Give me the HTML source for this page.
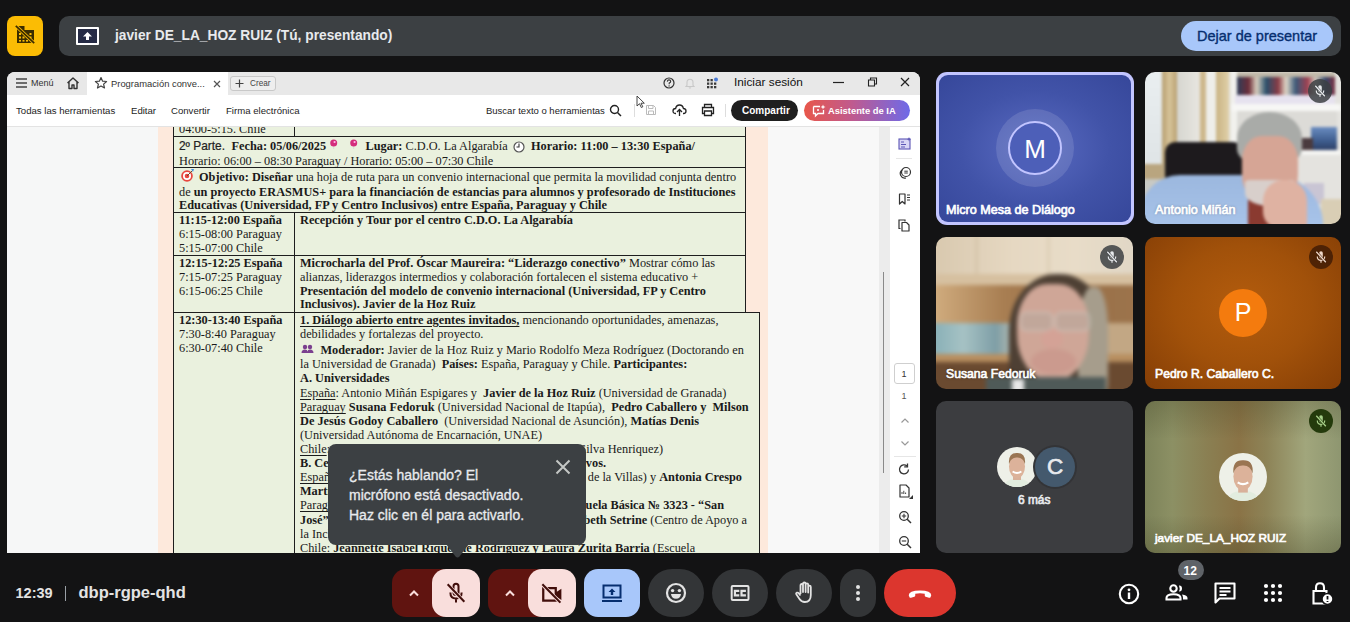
<!DOCTYPE html>
<html><head><meta charset="utf-8"><style>
html,body{margin:0;padding:0;}
body{width:1350px;height:622px;overflow:hidden;background:#131314;position:relative;font-family:"Liberation Sans",sans-serif;}
.t{position:absolute;white-space:nowrap;line-height:1;}
svg{overflow:visible;}
u{text-decoration-thickness:1px;text-underline-offset:1.5px;}
</style></head><body>
<div style="position:absolute;left:7px;top:16px;width:36px;height:40px;background:#fbbc04;border-radius:8px;"></div>
<svg style="position:absolute;left:15px;top:25px;" width="20" height="19" viewBox="0 0 20 19"><path d="M2 1 H9.5 V5 H19 V18 H2 Z" fill="#3a2c00"/><g fill="#fbbc04"><rect x="4" y="8" width="2" height="2"/><rect x="4" y="11.5" width="2" height="2"/><rect x="4" y="15" width="2" height="1.6"/><rect x="7.5" y="11.5" width="2" height="2"/><rect x="7.5" y="15" width="2" height="1.6"/><rect x="11" y="15" width="2" height="1.6"/><rect x="14.5" y="8" width="2" height="2"/><rect x="14.5" y="11.5" width="2" height="2"/></g><path d="M0.5 0.5 L19.5 18.5" stroke="#fbbc04" stroke-width="3.2"/><path d="M0.8 0.8 L19.2 18.2" stroke="#3a2c00" stroke-width="1.7"/></svg>
<div style="position:absolute;left:59px;top:16px;width:1282px;height:40px;background:#3c4043;border-radius:10px;"></div>
<div style="position:absolute;left:76px;top:27px;width:23px;height:18px;border:2px solid #fff;box-sizing:border-box;border-radius:1px;background:#262b45;"></div>
<svg style="position:absolute;left:81px;top:30px;" width="13" height="12" viewBox="0 0 13 12"><path d="M6.5 2 L11 6.5 H8 V10 H5 V6.5 H2 Z" fill="#fff"/></svg>
<div class="t" style="left:115px;top:29.36px;font-size:13.75px;color:#e8eaed;font-weight:700;font-family:'Liberation Sans', sans-serif;">javier DE_LA_HOZ RUIZ (Tú, presentando)</div>
<div style="position:absolute;left:1181px;top:21px;width:152px;height:30px;background:#a8c7fa;border-radius:15px;"></div>
<div class="t" style="left:1197px;top:28.73px;font-size:14.5px;color:#062e6f;font-weight:400;font-family:'Liberation Sans', sans-serif;-webkit-text-stroke:0.35px #062e6f;">Dejar de presentar</div>
<div style="position:absolute;left:7px;top:72px;width:913px;height:481px;background:#fff;border-radius:8px;overflow:hidden;"></div>
<div style="position:absolute;left:7px;top:72px;width:913px;height:22.5px;background:#e8e8e8;border-radius:8px 8px 0 0;"></div>
<div style="position:absolute;left:87px;top:72px;width:141px;height:22.5px;background:#fff;"></div>
<svg style="position:absolute;left:16px;top:78px;" width="12" height="10" viewBox="0 0 12 10"><path d="M0 1h11M0 5h11M0 9h11" stroke="#444" stroke-width="1.4"/></svg>
<div class="t" style="left:31px;top:79.38px;font-size:9px;color:#333;font-weight:400;font-family:'Liberation Sans', sans-serif;">Menú</div>
<svg style="position:absolute;left:66px;top:76px;" width="14" height="14" viewBox="0 0 14 14"><path d="M1.5 7 L7 2 L12.5 7 M3 6 V12.5 H6 V9 H8 V12.5 H11 V6" fill="none" stroke="#333" stroke-width="1.4" stroke-linejoin="round"/></svg>
<svg style="position:absolute;left:94px;top:76px;" width="14" height="14" viewBox="0 0 14 14"><path d="M7 1.5 L8.6 5.2 L12.6 5.5 L9.6 8.1 L10.5 12 L7 9.9 L3.5 12 L4.4 8.1 L1.4 5.5 L5.4 5.2 Z" fill="none" stroke="#444" stroke-width="1.2" stroke-linejoin="round"/></svg>
<div class="t" style="left:111px;top:79.04px;font-size:9.4px;color:#333;font-weight:400;font-family:'Liberation Sans', sans-serif;">Programación conve...</div>
<svg style="position:absolute;left:213px;top:80px;" width="8" height="8" viewBox="0 0 8 8"><path d="M1 1 L7 7 M7 1 L1 7" stroke="#555" stroke-width="1.2"/></svg>
<div style="position:absolute;left:230px;top:76px;width:46px;height:15px;border:1px solid #c8c8c8;border-radius:3px;box-sizing:border-box;background:#eee;"></div>
<svg style="position:absolute;left:235px;top:79px;" width="9" height="9" viewBox="0 0 9 9"><path d="M4.5 0.5 V8.5 M0.5 4.5 H8.5" stroke="#444" stroke-width="1.2"/></svg>
<div class="t" style="left:250px;top:80.06px;font-size:8.2px;color:#444;font-weight:400;font-family:'Liberation Sans', sans-serif;">Crear</div>
<svg style="position:absolute;left:663px;top:77px;" width="12" height="12" viewBox="0 0 12 12"><circle cx="6" cy="6" r="5" fill="none" stroke="#333" stroke-width="1.2"/><path d="M4.3 4.6 Q4.5 2.9 6 2.9 Q7.7 2.9 7.7 4.4 Q7.7 5.4 6.2 6 V7.2" fill="none" stroke="#333" stroke-width="1.1"/><circle cx="6.1" cy="8.9" r="0.7" fill="#333"/></svg>
<svg style="position:absolute;left:684px;top:77px;" width="12" height="12" viewBox="0 0 12 12"><path d="M2 9.5 H10 L9 8.3 V5.5 Q9 2.3 6 2.3 Q3 2.3 3 5.5 V8.3 Z M5 10.5 Q6 11.7 7 10.5" fill="none" stroke="#c8c8c8" stroke-width="1.1"/></svg>
<svg style="position:absolute;left:706px;top:77px;" width="13" height="12" viewBox="0 0 13 12"><g fill="#3b3b3b"><rect x="1" y="2" width="2.3" height="2.3"/><rect x="4.5" y="2" width="2.3" height="2.3"/><rect x="1" y="5.5" width="2.3" height="2.3"/><rect x="4.5" y="5.5" width="2.3" height="2.3"/><rect x="8" y="5.5" width="2.3" height="2.3"/><rect x="1" y="9" width="2.3" height="2.3"/><rect x="4.5" y="9" width="2.3" height="2.3"/><rect x="8" y="9" width="2.3" height="2.3"/></g><circle cx="10" cy="2.5" r="2" fill="#4a7bd6"/></svg>
<div class="t" style="left:734px;top:77.01px;font-size:11.8px;color:#111;font-weight:400;font-family:'Liberation Sans', sans-serif;">Iniciar sesión</div>
<svg style="position:absolute;left:833px;top:81px;" width="12" height="3" viewBox="0 0 12 3"><path d="M0 1.5 H11" stroke="#222" stroke-width="1.2"/></svg>
<svg style="position:absolute;left:866px;top:77px;" width="12" height="10" viewBox="0 0 12 10"><path d="M2.5 3 H8.5 V9 H2.5 Z M4.5 3 V1 H10.5 V7 H8.5" fill="none" stroke="#222" stroke-width="1.1"/></svg>
<svg style="position:absolute;left:900px;top:77px;" width="10" height="10" viewBox="0 0 10 10"><path d="M1 1 L9 9 M9 1 L1 9" stroke="#222" stroke-width="1.2"/></svg>
<div class="t" style="left:16px;top:105.87px;font-size:9.6px;color:#1d1d1d;font-weight:400;font-family:'Liberation Sans', sans-serif;">Todas las herramientas</div>
<div class="t" style="left:131px;top:105.87px;font-size:9.6px;color:#1d1d1d;font-weight:400;font-family:'Liberation Sans', sans-serif;">Editar</div>
<div class="t" style="left:171px;top:105.87px;font-size:9.6px;color:#1d1d1d;font-weight:400;font-family:'Liberation Sans', sans-serif;">Convertir</div>
<div class="t" style="left:226px;top:105.87px;font-size:9.6px;color:#1d1d1d;font-weight:400;font-family:'Liberation Sans', sans-serif;">Firma electrónica</div>
<div class="t" style="left:486px;top:105.96px;font-size:9.5px;color:#222;font-weight:400;font-family:'Liberation Sans', sans-serif;">Buscar texto o herramientas</div>
<svg style="position:absolute;left:609px;top:104px;" width="13" height="13" viewBox="0 0 13 13"><circle cx="5.5" cy="5.5" r="4" fill="none" stroke="#222" stroke-width="1.4"/><path d="M8.5 8.5 L12 12" stroke="#222" stroke-width="1.5"/></svg>
<div style="position:absolute;left:634px;top:104px;width:1px;height:13px;background:#ddd;"></div>
<svg style="position:absolute;left:645px;top:104px;" width="12" height="12" viewBox="0 0 12 12"><path d="M1.5 1.5 H8.5 L10.5 3.5 V10.5 H1.5 Z M3.5 1.5 V4.5 H8 V1.5 M3.5 10.5 V7 H8.5 V10.5" fill="none" stroke="#bbb" stroke-width="1"/></svg>
<svg style="position:absolute;left:672px;top:103px;" width="15" height="14" viewBox="0 0 15 14"><path d="M4 10.5 H3.5 Q1 10.5 1 8 Q1 5.6 3.6 5.5 Q4.3 2 7.5 2 Q10.8 2 11.4 5.5 Q14 5.7 14 8 Q14 10.5 11.5 10.5 H11" fill="none" stroke="#222" stroke-width="1.3"/><path d="M7.5 13 V6.5 M5 9 L7.5 6.5 L10 9" fill="none" stroke="#222" stroke-width="1.3"/></svg>
<svg style="position:absolute;left:701px;top:103px;" width="14" height="14" viewBox="0 0 14 14"><path d="M3.5 4.5 V1.5 H10.5 V4.5 M3 10.5 H1.5 V4.5 H12.5 V10.5 H11 M3.5 8 H10.5 V12.5 H3.5 Z" fill="none" stroke="#222" stroke-width="1.3"/></svg>
<div style="position:absolute;left:725px;top:104px;width:1px;height:13px;background:#ddd;"></div>
<div style="position:absolute;left:731px;top:100px;width:67px;height:21px;background:#1f1f1f;border-radius:11px;"></div>
<div class="t" style="left:742px;top:105.53px;font-size:10px;color:#fff;font-weight:700;font-family:'Liberation Sans', sans-serif;">Compartir</div>
<div style="position:absolute;left:804px;top:100px;width:106px;height:21px;border-radius:11px;background:linear-gradient(90deg,#e8574a 0%,#c05a8e 45%,#6e6ae8 100%);"></div>
<svg style="position:absolute;left:812px;top:104px;" width="14" height="13" viewBox="0 0 14 13"><path d="M1.5 2.5 H8 M11.5 6 V9.5 H6 L3.5 12 V9.5 H1.5 V2.5" fill="none" stroke="#fff" stroke-width="1.3"/><path d="M11 0.5 L11.7 2.3 L13.5 3 L11.7 3.7 L11 5.5 L10.3 3.7 L8.5 3 L10.3 2.3 Z" fill="#fff"/><circle cx="6" cy="6" r="1" fill="#fff"/></svg>
<div class="t" style="left:828px;top:106.04px;font-size:9.4px;color:#fff;font-weight:700;font-family:'Liberation Sans', sans-serif;">Asistente de IA</div>
<div style="position:absolute;left:7px;top:126px;width:151px;height:427px;background:#f6f7f7;"></div>
<div style="position:absolute;left:158px;top:126px;width:610px;height:427px;background:#fde9dc;"></div>
<div style="position:absolute;left:768px;top:126px;width:111px;height:427px;background:#f8f8f8;"></div>
<div style="position:absolute;left:879px;top:126px;width:11px;height:427px;background:#ececec;"></div>
<div style="position:absolute;left:890px;top:126px;width:30px;height:427px;background:#fff;"></div>
<div style="position:absolute;left:883px;top:272px;width:1px;height:201px;background:#8a8a8a;"></div>
<svg style="position:absolute;left:898px;top:137px;" width="14" height="13" viewBox="0 0 14 13"><rect x="1" y="2" width="11" height="10" fill="#d9d6f5" stroke="#5b55b5" stroke-width="1.1"/><path d="M3 5h3M3 7.5h5M3 10h4" stroke="#5b55b5" stroke-width="1"/><path d="M11 0 L11.6 1.6 L13.2 2.2 L11.6 2.8 L11 4.4 L10.4 2.8 L8.8 2.2 L10.4 1.6Z" fill="#5b55b5"/></svg>
<div style="position:absolute;left:896px;top:158px;width:16px;height:1px;background:#e6e6e6;"></div>
<svg style="position:absolute;left:898px;top:166px;" width="14" height="13" viewBox="0 0 14 13"><circle cx="8" cy="6" r="4.5" fill="none" stroke="#333" stroke-width="1.2"/><path d="M4.2 4 A4.5 4.5 0 0 0 8 12" fill="none" stroke="#333" stroke-width="1.2"/><path d="M6.3 5.2h3.5M6.3 7h3.5" stroke="#333" stroke-width="1"/></svg>
<svg style="position:absolute;left:898px;top:193px;" width="14" height="12" viewBox="0 0 14 12"><path d="M1.5 1 H7 V11 L4.25 8.5 L1.5 11 Z" fill="none" stroke="#333" stroke-width="1.2" stroke-linejoin="round"/><path d="M9 2h3M9 4.5h3M9 7h3" stroke="#333" stroke-width="1"/></svg>
<svg style="position:absolute;left:898px;top:219px;" width="13" height="13" viewBox="0 0 13 13"><path d="M2.5 9.5 H1 V1 H7 V2.5" fill="none" stroke="#333" stroke-width="1.2"/><path d="M4 3.5 H8.5 L11 6 V12 H4 Z" fill="none" stroke="#333" stroke-width="1.2" stroke-linejoin="round"/></svg>
<div style="position:absolute;left:894px;top:363px;width:21px;height:21px;border:1px solid #cfcfcf;border-radius:3px;box-sizing:border-box;background:#fff;"></div>
<div class="t" style="left:901.5px;top:369.88px;font-size:9px;color:#333;font-weight:400;font-family:'Liberation Sans', sans-serif;">1</div>
<div class="t" style="left:901.5px;top:392.38px;font-size:9px;color:#555;font-weight:400;font-family:'Liberation Sans', sans-serif;">1</div>
<svg style="position:absolute;left:900px;top:417px;" width="10" height="7" viewBox="0 0 10 7"><path d="M1.5 5.5 L5 2 L8.5 5.5" fill="none" stroke="#999" stroke-width="1.2"/></svg>
<svg style="position:absolute;left:900px;top:440px;" width="10" height="7" viewBox="0 0 10 7"><path d="M1.5 1.5 L5 5 L8.5 1.5" fill="none" stroke="#999" stroke-width="1.2"/></svg>
<div style="position:absolute;left:894px;top:456px;width:22px;height:1px;background:#e6e6e6;"></div>
<svg style="position:absolute;left:898px;top:463px;" width="13" height="13" viewBox="0 0 13 13"><path d="M10.5 6.5 A4.5 4.5 0 1 1 9 3" fill="none" stroke="#333" stroke-width="1.3"/><path d="M9.5 0.5 V3.8 H6.2" fill="none" stroke="#333" stroke-width="1.3"/></svg>
<svg style="position:absolute;left:898px;top:484px;" width="16" height="15" viewBox="0 0 16 15"><path d="M2 1 H8 L11 4 V13 H2 Z" fill="none" stroke="#333" stroke-width="1.2" stroke-linejoin="round"/><path d="M4 10 V8 M5.8 10 V6.8 M7.6 10 V8.5" stroke="#333" stroke-width="0.9"/><path d="M15 11 V15 H11 Z" fill="#333"/></svg>
<svg style="position:absolute;left:898px;top:510px;" width="14" height="14" viewBox="0 0 14 14"><circle cx="6" cy="6" r="4.3" fill="none" stroke="#333" stroke-width="1.3"/><path d="M9.2 9.2 L13 13" stroke="#333" stroke-width="1.5"/><path d="M6 3.8 V8.2 M3.8 6 H8.2" stroke="#333" stroke-width="1.1"/></svg>
<svg style="position:absolute;left:898px;top:535px;" width="14" height="14" viewBox="0 0 14 14"><circle cx="6" cy="6" r="4.3" fill="none" stroke="#333" stroke-width="1.3"/><path d="M9.2 9.2 L13 13" stroke="#333" stroke-width="1.5"/><path d="M3.8 6 H8.2" stroke="#333" stroke-width="1.1"/></svg>
<div style="position:absolute;left:0;top:126px;width:920px;height:427px;overflow:hidden;"><div style="position:absolute;left:0;top:-126px;width:1350px;height:700px;">
<div style="position:absolute;left:174px;top:100px;width:571px;height:212px;background:#eaf1de;"></div>
<div style="position:absolute;left:174px;top:312px;width:586px;height:260px;background:#eaf1de;"></div>
<div style="position:absolute;left:173px;top:100px;width:1px;height:460px;background:#1e1e1e;"></div>
<div style="position:absolute;left:294px;top:100px;width:1px;height:36px;background:#1e1e1e;"></div>
<div style="position:absolute;left:294px;top:212px;width:1px;height:350px;background:#1e1e1e;"></div>
<div style="position:absolute;left:745px;top:100px;width:1px;height:212px;background:#1e1e1e;"></div>
<div style="position:absolute;left:759px;top:312px;width:1px;height:250px;background:#1e1e1e;"></div>
<div style="position:absolute;left:173px;top:136px;width:573px;height:1px;background:#1e1e1e;"></div>
<div style="position:absolute;left:173px;top:167px;width:573px;height:1px;background:#1e1e1e;"></div>
<div style="position:absolute;left:173px;top:212px;width:573px;height:1px;background:#1e1e1e;"></div>
<div style="position:absolute;left:173px;top:255px;width:573px;height:1px;background:#1e1e1e;"></div>
<div style="position:absolute;left:173px;top:312px;width:587px;height:1px;background:#1e1e1e;"></div>
<div class="t" style="left:179px;top:123.20px;font-size:12.3px;color:#1a1a1a;font-weight:400;font-family:'Liberation Serif', serif;">04:00-5:15. Chile</div>
<div class="t" style="left:179px;top:140.73px;font-size:11.9px;color:#222;font-weight:400;font-family:'Liberation Sans', sans-serif;-webkit-text-stroke:0.2px #222;">2º Parte.</div>
<div class="t" style="left:231.5px;top:140.20px;font-size:12.3px;color:#1a1a1a;font-weight:400;font-family:'Liberation Serif', serif;"><b>Fecha: 05/06/2025</b></div>
<svg style="position:absolute;left:329px;top:139px;" width="10" height="11" viewBox="0 0 10 11"><path d="M4.7 6 V10" stroke="#ccc" stroke-width="0.6"/><circle cx="4.7" cy="4" r="3.5" fill="#d42d7c"/><circle cx="5.6" cy="3" r="1.1" fill="#ffb8e8"/></svg>
<svg style="position:absolute;left:349px;top:139px;" width="10" height="11" viewBox="0 0 10 11"><path d="M4.7 6 V10" stroke="#ccc" stroke-width="0.6"/><circle cx="4.7" cy="4" r="3.5" fill="#d42d7c"/><circle cx="5.6" cy="3" r="1.1" fill="#ffb8e8"/></svg>
<div class="t" style="left:365.5px;top:140.20px;font-size:12.3px;color:#1a1a1a;font-weight:400;font-family:'Liberation Serif', serif;"><b>Lugar:</b> C.D.O. La Algarabía</div>
<svg style="position:absolute;left:512px;top:140px;" width="14" height="14" viewBox="0 0 14 14"><circle cx="7" cy="7" r="5" fill="#fff" stroke="#555" stroke-width="1.2"/><path d="M7 3.5 V7 H4.5" fill="none" stroke="#333" stroke-width="1.1"/></svg>
<div class="t" style="left:531px;top:140.20px;font-size:12.3px;color:#1a1a1a;font-weight:400;font-family:'Liberation Serif', serif;"><b>Horario: 11:00 – 13:30 España/</b></div>
<div class="t" style="left:179px;top:155.00px;font-size:12.3px;color:#1a1a1a;font-weight:400;font-family:'Liberation Serif', serif;">Horario: 06:00 – 08:30 Paraguay / Horario: 05:00 – 07:30 Chile</div>
<svg style="position:absolute;left:180px;top:168px;" width="15" height="15" viewBox="0 0 15 15"><circle cx="7" cy="8" r="5.8" fill="#e8473f"/><circle cx="7" cy="8" r="4" fill="#fff"/><circle cx="7" cy="8" r="2.3" fill="#e8473f"/><path d="M7 8 L12.5 2.5" stroke="#6b4a2a" stroke-width="1"/><path d="M11 1 L14 1 L13 4 Z" fill="#3f8fe0"/></svg>
<div class="t" style="left:199px;top:170.90px;font-size:12.3px;color:#1a1a1a;font-weight:400;font-family:'Liberation Serif', serif;width:534px;text-align:justify;text-align-last:justify;"><b>Objetivo: Diseñar</b> una hoja de ruta para un convenio internacional que permita la movilidad conjunta dentro</div>
<div class="t" style="left:179px;top:186.10px;font-size:12.3px;color:#1a1a1a;font-weight:400;font-family:'Liberation Serif', serif;width:554px;text-align:justify;text-align-last:justify;">de <b>un proyecto ERASMUS+ para la financiación de estancias para alumnos y profesorado de Instituciones</b></div>
<div class="t" style="left:179px;top:199.40px;font-size:12.3px;color:#1a1a1a;font-weight:400;font-family:'Liberation Serif', serif;"><b>Educativas (Universidad, FP y Centro Inclusivos) entre España, Paraguay y Chile</b></div>
<div class="t" style="left:179px;top:214.20px;font-size:12.3px;color:#1a1a1a;font-weight:400;font-family:'Liberation Serif', serif;"><b>11:15-12:00 España</b></div>
<div class="t" style="left:179px;top:228.20px;font-size:12.3px;color:#1a1a1a;font-weight:400;font-family:'Liberation Serif', serif;">6:15-08:00 Paraguay</div>
<div class="t" style="left:179px;top:241.90px;font-size:12.3px;color:#1a1a1a;font-weight:400;font-family:'Liberation Serif', serif;">5:15-07:00 Chile</div>
<div class="t" style="left:300px;top:214.20px;font-size:12.3px;color:#1a1a1a;font-weight:400;font-family:'Liberation Serif', serif;"><b>Recepción y Tour por el centro C.D.O. La Algarabía</b></div>
<div class="t" style="left:179px;top:256.80px;font-size:12.3px;color:#1a1a1a;font-weight:400;font-family:'Liberation Serif', serif;"><b>12:15-12:25 España</b></div>
<div class="t" style="left:179px;top:270.70px;font-size:12.3px;color:#1a1a1a;font-weight:400;font-family:'Liberation Serif', serif;">7:15-07:25 Paraguay</div>
<div class="t" style="left:179px;top:284.80px;font-size:12.3px;color:#1a1a1a;font-weight:400;font-family:'Liberation Serif', serif;">6:15-06:25 Chile</div>
<div class="t" style="left:300px;top:256.80px;font-size:12.3px;color:#1a1a1a;font-weight:400;font-family:'Liberation Serif', serif;"><b>Microcharla del Prof. Óscar Maureira: “Liderazgo conectivo”</b> Mostrar cómo las</div>
<div class="t" style="left:300px;top:270.70px;font-size:12.3px;color:#1a1a1a;font-weight:400;font-family:'Liberation Serif', serif;">alianzas, liderazgos intermedios y colaboración fortalecen el sistema educativo +</div>
<div class="t" style="left:300px;top:284.80px;font-size:12.3px;color:#1a1a1a;font-weight:400;font-family:'Liberation Serif', serif;"><b>Presentación del modelo de convenio internacional (Universidad, FP y Centro</b></div>
<div class="t" style="left:300px;top:298.20px;font-size:12.3px;color:#1a1a1a;font-weight:400;font-family:'Liberation Serif', serif;"><b>Inclusivos). Javier de la Hoz Ruiz</b></div>
<div class="t" style="left:179px;top:313.50px;font-size:12.3px;color:#1a1a1a;font-weight:400;font-family:'Liberation Serif', serif;"><b>12:30-13:40 España</b></div>
<div class="t" style="left:179px;top:327.80px;font-size:12.3px;color:#1a1a1a;font-weight:400;font-family:'Liberation Serif', serif;">7:30-8:40 Paraguay</div>
<div class="t" style="left:179px;top:341.70px;font-size:12.3px;color:#1a1a1a;font-weight:400;font-family:'Liberation Serif', serif;">6:30-07:40 Chile</div>
<div class="t" style="left:300px;top:313.50px;font-size:12.3px;color:#1a1a1a;font-weight:400;font-family:'Liberation Serif', serif;"><u><b>1. Diálogo abierto entre agentes invitados,</b></u> mencionando oportunidades, amenazas,</div>
<div class="t" style="left:300px;top:327.80px;font-size:12.3px;color:#1a1a1a;font-weight:400;font-family:'Liberation Serif', serif;">debilidades y fortalezas del proyecto.</div>
<svg style="position:absolute;left:301px;top:344px;" width="13" height="10" viewBox="0 0 13 10"><circle cx="4" cy="3" r="2.2" fill="#7a3f8e"/><circle cx="9" cy="3" r="2.2" fill="#7a3f8e"/><path d="M0.5 9 Q0.5 5.5 4 5.5 Q6.5 5.5 6.5 7.5 Q6.5 5.5 9 5.5 Q12.5 5.5 12.5 9 Z" fill="#7a3f8e"/></svg>
<div class="t" style="left:320.5px;top:343.80px;font-size:12.3px;color:#1a1a1a;font-weight:400;font-family:'Liberation Serif', serif;"><b>Moderador:</b> Javier de la Hoz Ruiz y Mario Rodolfo Meza Rodríguez (Doctorando en</div>
<div class="t" style="left:300px;top:358.00px;font-size:12.3px;color:#1a1a1a;font-weight:400;font-family:'Liberation Serif', serif;">la Universidad de Granada)&nbsp; <b>Países:</b> España, Paraguay y Chile. <b>Participantes:</b></div>
<div class="t" style="left:300px;top:372.20px;font-size:12.3px;color:#1a1a1a;font-weight:400;font-family:'Liberation Serif', serif;"><b>A. Universidades</b></div>
<div class="t" style="left:300px;top:387.10px;font-size:12.3px;color:#1a1a1a;font-weight:400;font-family:'Liberation Serif', serif;"><u>España</u>: Antonio Miñán Espigares y&nbsp; <b>Javier de la Hoz Ruiz</b> (Universidad de Granada)</div>
<div class="t" style="left:300px;top:401.20px;font-size:12.3px;color:#1a1a1a;font-weight:400;font-family:'Liberation Serif', serif;"><u>Paraguay</u> <b>Susana Fedoruk</b> (Universidad Nacional de Itapúa),&nbsp; <b>Pedro Caballero y&nbsp; Milson</b></div>
<div class="t" style="left:300px;top:414.60px;font-size:12.3px;color:#1a1a1a;font-weight:400;font-family:'Liberation Serif', serif;"><b>De Jesús Godoy Caballero</b>&nbsp; (Universidad Nacional de Asunción), <b>Matías Denis</b></div>
<div class="t" style="left:300px;top:428.90px;font-size:12.3px;color:#1a1a1a;font-weight:400;font-family:'Liberation Serif', serif;">(Universidad Autónoma de Encarnación, UNAE)</div>
<div class="t" style="left:300px;top:443.10px;font-size:12.3px;color:#1a1a1a;font-weight:400;font-family:'Liberation Serif', serif;"><u>Chile</u>: Nelson Caro</div>
<div class="t" style="right:687px;top:443.10px;font-size:12.3px;color:#1a1a1a;font-family:'Liberation Serif', serif;">(Universidad Católica Silva Henriquez)</div>
<div class="t" style="left:300px;top:457.20px;font-size:12.3px;color:#1a1a1a;font-weight:400;font-family:'Liberation Serif', serif;"><b>B. Centros Educativos</b></div>
<div class="t" style="right:744px;top:457.20px;font-size:12.3px;color:#1a1a1a;font-family:'Liberation Serif', serif;"><b>Inclusivos.</b></div>
<div class="t" style="right:608px;top:471.20px;font-size:12.3px;color:#1a1a1a;font-family:'Liberation Serif', serif;">: Centro CDO (Fundación de la Villas) y <b>Antonia Crespo</b></div>
<div class="t" style="left:300px;top:471.20px;font-size:12.3px;color:#1a1a1a;font-weight:400;font-family:'Liberation Serif', serif;"><u>España</u>: Centro</div>
<div class="t" style="left:300px;top:485.20px;font-size:12.3px;color:#1a1a1a;font-weight:400;font-family:'Liberation Serif', serif;"><b>Martínez</b></div>
<div class="t" style="left:300px;top:499.20px;font-size:12.3px;color:#1a1a1a;font-weight:400;font-family:'Liberation Serif', serif;"><u>Paraguay</u>: </div>
<div class="t" style="right:626px;top:499.20px;font-size:12.3px;color:#1a1a1a;font-family:'Liberation Serif', serif;"><b>Escuela Básica № 3323 - “San</b></div>
<div class="t" style="left:300px;top:514.20px;font-size:12.3px;color:#1a1a1a;font-weight:400;font-family:'Liberation Serif', serif;"><b>José” </b> y </div>
<div class="t" style="right:603px;top:514.20px;font-size:12.3px;color:#1a1a1a;font-family:'Liberation Serif', serif;"><b>Elizabeth Setrine</b> (Centro de Apoyo a</div>
<div class="t" style="left:300px;top:528.20px;font-size:12.3px;color:#1a1a1a;font-weight:400;font-family:'Liberation Serif', serif;">la Inclusión)</div>
<div class="t" style="left:300px;top:542.20px;font-size:12.3px;color:#1a1a1a;font-weight:400;font-family:'Liberation Serif', serif;">Chile: <b>Jeannette Isabel Riquelme Rodriguez y Laura Zurita Barria</b> (Escuela</div>
</div></div>
<div style="position:absolute;left:7px;top:126px;width:913px;height:1px;background:#e3e3e3;"></div>
<div style="position:absolute;left:936px;top:72px;width:198px;height:153px;border-radius:11px;background:#c2c5ff;"></div>
<div style="position:absolute;left:939px;top:75px;width:192px;height:147px;border-radius:9px;background:radial-gradient(ellipse at 50% 50%,#5a6bc2 0%,#4153a8 55%,#36479a 100%);"></div>
<div style="position:absolute;left:996px;top:109px;width:78px;height:78px;border-radius:50%;background:rgba(255,255,255,0.12);"></div>
<div style="position:absolute;left:1008px;top:121px;width:54px;height:54px;border-radius:50%;border:2.5px solid #c2c5ff;box-sizing:border-box;background:#4d5fb8;"></div>
<div class="t" style="left:1008px;top:136.49px;font-size:26px;color:#fff;font-weight:400;font-family:'Liberation Sans', sans-serif;width:54px;text-align:center;">M</div>
<div class="t" style="left:946px;top:203.83px;font-size:12.6px;color:#fff;font-weight:400;font-family:'Liberation Sans', sans-serif;-webkit-text-stroke:0.65px #fff;">Micro Mesa de Diálogo</div>
<div style="position:absolute;left:1145px;top:72px;width:196px;height:152px;border-radius:10px;overflow:hidden;"><div style="position:absolute;inset:0;filter:blur(1.6px);"><div style="position:absolute;left:-5px;top:-5px;width:206px;height:162px;background:#d4d4d0;"></div><div style="position:absolute;left:-5px;top:-5px;width:94px;height:110px;background:#e6e8e6;"></div><div style="position:absolute;left:0px;top:0px;width:17px;height:92px;background:linear-gradient(180deg,#e9eef0,#dfe4e6);"></div><div style="position:absolute;left:17px;top:-5px;width:15px;height:110px;background:linear-gradient(90deg,#b59d6e,#d7c49a 50%,#b8a070);"></div><div style="position:absolute;left:32px;top:-5px;width:23px;height:100px;background:linear-gradient(90deg,#d6d6d0,#e8e6e0);"></div><div style="position:absolute;left:55px;top:-5px;width:6px;height:100px;background:#cdb78b;"></div><div style="position:absolute;left:61px;top:-5px;width:10px;height:100px;background:#eeeeea;"></div><div style="position:absolute;left:71px;top:-5px;width:13px;height:100px;background:linear-gradient(90deg,#c9b383,#e0d0a8);"></div><div style="position:absolute;left:-5px;top:92px;width:30px;height:16px;background:#b9a57f;"></div><div style="position:absolute;left:-5px;top:107px;width:95px;height:50px;background:#c8c9c4;"></div><div style="position:absolute;left:84px;top:-5px;width:117px;height:162px;background:#e4e3df;"></div><div style="position:absolute;left:86px;top:-5px;width:6px;height:162px;background:#f2f2ee;"></div><div style="position:absolute;left:92px;top:4px;width:98px;height:22px;background:linear-gradient(90deg,#2f3d58 0%,#6c2c38 12%,#d9d0bf 20%,#294e6a 30%,#8a3a44 42%,#e0d8c8 50%,#3a5878 60%,#a04050 72%,#cfc8bc 80%,#33466a 90%,#7b3040 100%);"></div><div style="position:absolute;left:92px;top:0px;width:98px;height:5px;background:#bfb8a8;"></div><div style="position:absolute;left:90px;top:23px;width:100px;height:10px;background:#e6e2ef;"></div><div style="position:absolute;left:86px;top:32px;width:110px;height:7px;background:#f7f7f5;"></div><div style="position:absolute;left:92px;top:39px;width:100px;height:40px;background:#dcdbd7;"></div><div style="position:absolute;left:166px;top:55px;width:26px;height:23px;background:linear-gradient(180deg,#6a8cc0,#3e5d8e 60%,#2d3f66);"></div><div style="position:absolute;left:156px;top:66px;width:12px;height:12px;background:#4a3a3e;"></div><div style="position:absolute;left:86px;top:78px;width:110px;height:5px;background:#f4f4f2;"></div><div style="position:absolute;left:159px;top:111px;width:20px;height:21px;background:#c9c5d4;"></div><div style="position:absolute;left:20px;top:70px;width:78px;height:60px;background:#1d1a1d;border-radius:10px 10px 0 0;"></div><div style="position:absolute;left:176px;top:127px;width:25px;height:30px;background:#d9ceb5;"></div><div style="position:absolute;left:-5px;top:103px;width:183px;height:55px;background:linear-gradient(180deg,#9bb7de,#a8c4ea);border-radius:40px 50px 0 0;"></div><div style="position:absolute;left:103px;top:125px;width:25px;height:30px;background:#8a3a30;"></div><div style="position:absolute;left:92px;top:40px;width:65px;height:52px;background:#a9aba8;border-radius:50% 50% 30% 30%;"></div><div style="position:absolute;left:97px;top:64px;width:56px;height:70px;background:#d6a595;border-radius:35% 35% 45% 45%;"></div><div style="position:absolute;left:100px;top:108px;width:50px;height:26px;background:#d8cfcb;border-radius:10% 10% 50% 50%;"></div><div style="position:absolute;left:118px;top:108px;width:44px;height:48px;background:#dfb2a2;border-radius:45% 45% 10% 35%;"></div></div></div>
<div class="t" style="left:1155px;top:203.83px;font-size:12.6px;color:#fff;font-weight:400;font-family:'Liberation Sans', sans-serif;text-shadow:0 0 3px rgba(0,0,0,.4);-webkit-text-stroke:0.65px #fff;">Antonio Miñán</div>
<svg style="position:absolute;left:1308px;top:79px;" width="24" height="24" viewBox="0 0 24 24"><circle cx="12" cy="12" r="12" fill="rgba(60,64,67,0.85)"/><path d="M12 6.3 Q10.2 6.3 10.2 8.1 V11.8 Q10.2 13.6 12 13.6 Q13.8 13.6 13.8 11.8 V8.1 Q13.8 6.3 12 6.3 Z" fill="#e8eaed"/><path d="M8.3 11.6 Q8.3 15.4 12 15.4 Q15.7 15.4 15.7 11.6 M12 15.4 V17.8" fill="none" stroke="#e8eaed" stroke-width="1.2"/><path d="M7 6.5 L17 17.5" stroke="rgba(60,64,67,0.85)" stroke-width="2.6"/><path d="M7.3 6.7 L16.8 17.3" stroke="#e8eaed" stroke-width="1.3"/></svg>
<div style="position:absolute;left:936px;top:237px;width:197px;height:152px;border-radius:10px;overflow:hidden;"><div style="position:absolute;inset:0;filter:blur(2px);"><div style="position:absolute;left:-5px;top:-5px;width:207px;height:162px;background:#7a5a3c;"></div><div style="position:absolute;left:-5px;top:-5px;width:207px;height:45px;background:linear-gradient(90deg,#d8c8ae,#e6d8c2 40%,#e8dcc8 70%,#e0d6c6);"></div><div style="position:absolute;left:40px;top:-5px;width:1px;height:45px;background:#c2ad8c;"></div><div style="position:absolute;left:112px;top:-5px;width:1px;height:45px;background:#c9b898;"></div><div style="position:absolute;left:-5px;top:37px;width:207px;height:11px;background:#d6c0a0;"></div><div style="position:absolute;left:-5px;top:48px;width:207px;height:38px;background:linear-gradient(90deg,#d2ae80,#a87e52 35%,#9a7048 70%,#9c744c);"></div><div style="position:absolute;left:-5px;top:86px;width:81px;height:31px;background:linear-gradient(90deg,#86aeb6,#a6c2c4 40%,#7e9ea6 80%,#b0b8b0);"></div><div style="position:absolute;left:150px;top:86px;width:52px;height:32px;background:#c2a784;"></div><div style="position:absolute;left:-5px;top:117px;width:207px;height:8px;background:#b88f60;"></div><div style="position:absolute;left:-5px;top:125px;width:207px;height:32px;background:#6a4a30;"></div><div style="position:absolute;left:73px;top:37px;width:98px;height:120px;background:#4e4034;border-radius:48% 48% 6% 6%;"></div><div style="position:absolute;left:142px;top:50px;width:30px;height:107px;background:#a69d8c;border-radius:45% 40% 10% 10%;"></div><div style="position:absolute;left:81px;top:47px;width:72px;height:97px;background:#cfa697;border-radius:42% 42% 48% 48%;"></div><div style="position:absolute;left:84px;top:75px;width:31px;height:17px;border:1.5px solid rgba(215,220,215,.7);border-radius:6px;background:rgba(150,170,165,.25);"></div><div style="position:absolute;left:119px;top:75px;width:33px;height:17px;border:1.5px solid rgba(215,220,215,.7);border-radius:6px;background:rgba(150,170,165,.25);"></div><div style="position:absolute;left:105px;top:92px;width:22px;height:20px;background:rgba(215,160,150,.6);border-radius:50%;"></div><div style="position:absolute;left:95px;top:112px;width:45px;height:25px;background:rgba(190,120,115,.25);border-radius:50%;"></div><div style="position:absolute;left:50px;top:140px;width:120px;height:20px;background:#4f5a58;"></div><div style="position:absolute;left:76px;top:142px;width:12px;height:14px;background:#e8e8e8;"></div></div></div>
<div class="t" style="left:946px;top:368.17px;font-size:12.2px;color:#fff;font-weight:400;font-family:'Liberation Sans', sans-serif;text-shadow:0 0 3px rgba(0,0,0,.4);-webkit-text-stroke:0.65px #fff;">Susana Fedoruk</div>
<svg style="position:absolute;left:1100px;top:245px;" width="24" height="24" viewBox="0 0 24 24"><circle cx="12" cy="12" r="12" fill="rgba(60,64,67,0.85)"/><path d="M12 6.3 Q10.2 6.3 10.2 8.1 V11.8 Q10.2 13.6 12 13.6 Q13.8 13.6 13.8 11.8 V8.1 Q13.8 6.3 12 6.3 Z" fill="#e8eaed"/><path d="M8.3 11.6 Q8.3 15.4 12 15.4 Q15.7 15.4 15.7 11.6 M12 15.4 V17.8" fill="none" stroke="#e8eaed" stroke-width="1.2"/><path d="M7 6.5 L17 17.5" stroke="rgba(60,64,67,0.85)" stroke-width="2.6"/><path d="M7.3 6.7 L16.8 17.3" stroke="#e8eaed" stroke-width="1.3"/></svg>
<div style="position:absolute;left:1145px;top:237px;width:196px;height:152px;border-radius:10px;background:radial-gradient(ellipse at 50% 45%,#b35c0d 0%,#a1510a 50%,#853e06 100%);"></div>
<div style="position:absolute;left:1219px;top:288.5px;width:48px;height:48px;border-radius:50%;background:#f47b0e;"></div>
<div class="t" style="left:1219px;top:300.34px;font-size:25px;color:#fff;font-weight:400;font-family:'Liberation Sans', sans-serif;width:48px;text-align:center;">P</div>
<div class="t" style="left:1155px;top:368.17px;font-size:12.2px;color:#fff;font-weight:400;font-family:'Liberation Sans', sans-serif;-webkit-text-stroke:0.65px #fff;">Pedro R. Caballero C.</div>
<svg style="position:absolute;left:1309px;top:245px;" width="24" height="24" viewBox="0 0 24 24"><circle cx="12" cy="12" r="12" fill="rgba(60,25,5,0.8)"/><path d="M12 6.3 Q10.2 6.3 10.2 8.1 V11.8 Q10.2 13.6 12 13.6 Q13.8 13.6 13.8 11.8 V8.1 Q13.8 6.3 12 6.3 Z" fill="#f0d8c8"/><path d="M8.3 11.6 Q8.3 15.4 12 15.4 Q15.7 15.4 15.7 11.6 M12 15.4 V17.8" fill="none" stroke="#f0d8c8" stroke-width="1.2"/><path d="M7 6.5 L17 17.5" stroke="rgba(60,25,5,0.8)" stroke-width="2.6"/><path d="M7.3 6.7 L16.8 17.3" stroke="#f0d8c8" stroke-width="1.3"/></svg>
<div style="position:absolute;left:936px;top:401px;width:197px;height:152px;border-radius:10px;background:#3c3d40;"></div>
<svg style="position:absolute;left:997px;top:446.5px;" width="40" height="40" viewBox="0 0 40 40"><defs><clipPath id="c1017"><circle cx="20" cy="20" r="20"/></clipPath></defs><g clip-path="url(#c1017)"><rect width="40" height="40" fill="#eef0e8"/><path d="M6.0 40 Q9.0 31.0 20 32.0 Q31.0 31.0 34.0 40 Z" fill="#e2ecdf"/><rect x="16.0" y="24.0" width="8.0" height="9.0" fill="#d8b09a"/><ellipse cx="20" cy="19.6" rx="8.0" ry="11.6" fill="#dcb29a"/><path d="M12.0 17.0 Q11.0 5.6000000000000005 20 6.0 Q29.0 5.6000000000000005 28.0 17.0 Q26.0 10.0 20 10.4 Q14.0 10.0 12.0 17.0 Z" fill="#9a7552"/><path d="M15.600000000000001 24.4 Q20 27.599999999999998 24.4 24.4" fill="none" stroke="#fff" stroke-width="1.7999999999999998"/></g></svg>
<div style="position:absolute;left:1035px;top:446.5px;width:40px;height:40px;border-radius:50%;background:#44596d;box-shadow:0 0 0 2px #333437;"></div>
<div class="t" style="left:1035px;top:455.95px;font-size:22.5px;color:#e8eaed;font-weight:400;font-family:'Liberation Sans', sans-serif;width:40px;text-align:center;-webkit-text-stroke:0.65px #e8eaed;">C</div>
<div class="t" style="left:1018px;top:494.93px;font-size:11.9px;color:#e8eaed;font-weight:400;font-family:'Liberation Sans', sans-serif;-webkit-text-stroke:0.65px #e8eaed;">6 más</div>
<div style="position:absolute;left:1145px;top:401px;width:196px;height:152px;border-radius:10px;overflow:hidden;background:linear-gradient(90deg,#7d835a 0%,#8c9064 14%,#8a7f52 32%,#8a7346 48%,#8d8357 62%,#a1a67c 82%,#8e9670 100%);"><div style="position:absolute;inset:0;background:linear-gradient(180deg,rgba(60,60,30,.25),rgba(0,0,0,0) 25%,rgba(0,0,0,0) 75%,rgba(60,60,30,.3));"></div></div>
<svg style="position:absolute;left:1218.5px;top:453px;" width="48" height="48" viewBox="0 0 48 48"><defs><clipPath id="c1242.5"><circle cx="24" cy="24" r="24"/></clipPath></defs><g clip-path="url(#c1242.5)"><rect width="48" height="48" fill="#eef0e8"/><path d="M7.199999999999999 48 Q10.8 37.2 24 38.400000000000006 Q37.2 37.2 40.8 48 Z" fill="#e2ecdf"/><rect x="19.200000000000003" y="28.799999999999997" width="9.600000000000001" height="10.8" fill="#d8b09a"/><ellipse cx="24" cy="23.52" rx="9.600000000000001" ry="13.919999999999998" fill="#dcb29a"/><path d="M14.399999999999999 20.4 Q13.200000000000001 6.720000000000001 24 7.199999999999999 Q34.8 6.720000000000001 33.599999999999994 20.4 Q31.200000000000003 12.0 24 12.48 Q16.799999999999997 12.0 14.399999999999999 20.4 Z" fill="#9a7552"/><path d="M18.72 29.28 Q24 33.12 29.28 29.28" fill="none" stroke="#fff" stroke-width="2.16"/></g></svg>
<div class="t" style="left:1155px;top:532.81px;font-size:11.8px;color:#fff;font-weight:400;font-family:'Liberation Sans', sans-serif;-webkit-text-stroke:0.65px #fff;">javier DE_LA_HOZ RUIZ</div>
<svg style="position:absolute;left:1308.5px;top:409px;" width="24" height="24" viewBox="0 0 24 24"><circle cx="12" cy="12" r="12" fill="#243a0c"/><path d="M12 6.3 Q10.2 6.3 10.2 8.1 V11.8 Q10.2 13.6 12 13.6 Q13.8 13.6 13.8 11.8 V8.1 Q13.8 6.3 12 6.3 Z" fill="#a8d08a"/><path d="M8.3 11.6 Q8.3 15.4 12 15.4 Q15.7 15.4 15.7 11.6 M12 15.4 V17.8" fill="none" stroke="#a8d08a" stroke-width="1.2"/><path d="M7 6.5 L17 17.5" stroke="#243a0c" stroke-width="2.6"/><path d="M7.3 6.7 L16.8 17.3" stroke="#a8d08a" stroke-width="1.3"/></svg>
<div class="t" style="left:15.5px;top:585.73px;font-size:14.5px;color:#e3e3e3;font-weight:700;font-family:'Liberation Sans', sans-serif;">12:39</div>
<div style="position:absolute;left:65px;top:586px;width:1px;height:15px;background:#9aa0a6;"></div>
<div class="t" style="left:78.5px;top:584.03px;font-size:16.5px;color:#e3e3e3;font-weight:700;font-family:'Liberation Sans', sans-serif;">dbp-rgpe-qhd</div>
<div style="position:absolute;left:392px;top:569px;width:52px;height:48px;background:#601410;border-radius:14px 0 0 14px;"></div>
<div style="position:absolute;left:432px;top:569px;width:48px;height:48px;background:#f9dedc;border-radius:14px;"></div>
<svg style="position:absolute;left:408px;top:589px;" width="12" height="8" viewBox="0 0 12 8"><path d="M2 6.5 L6 2.5 L10 6.5" fill="none" stroke="#f9dedc" stroke-width="2"/></svg>
<svg style="position:absolute;left:441px;top:578px;" width="30" height="30" viewBox="0 0 30 30"><g transform="scale(1.25)"><path d="M12 4.5 Q10 4.5 10 6.5 V11.5 Q10 13.5 12 13.5 Q14 13.5 14 11.5 V6.5 Q14 4.5 12 4.5 Z" fill="none" stroke="#410e0b" stroke-width="1.6"/><path d="M7.5 11.5 Q7.5 16.3 12 16.3 Q16.5 16.3 16.5 11.5 M12 16.3 V19.5" fill="none" stroke="#410e0b" stroke-width="1.6"/><path d="M5 5 L19 19.5" stroke="#f9dedc" stroke-width="3"/><path d="M5.3 5 L18.7 19" stroke="#410e0b" stroke-width="1.6"/></g></svg>
<div style="position:absolute;left:488px;top:569px;width:52px;height:48px;background:#601410;border-radius:14px 0 0 14px;"></div>
<div style="position:absolute;left:528px;top:569px;width:48px;height:48px;background:#f9dedc;border-radius:14px;"></div>
<svg style="position:absolute;left:504px;top:589px;" width="12" height="8" viewBox="0 0 12 8"><path d="M2 6.5 L6 2.5 L10 6.5" fill="none" stroke="#f9dedc" stroke-width="2"/></svg>
<svg style="position:absolute;left:537px;top:578px;" width="30" height="30" viewBox="0 0 30 30"><g transform="scale(1.25)"><path d="M5 8 H15 V18 H5 Z" fill="none" stroke="#410e0b" stroke-width="1.8"/><path d="M15 11.5 L19.5 8.5 V17.5 L15 14.5" fill="#410e0b"/><path d="M4 5 L19 20" stroke="#f9dedc" stroke-width="3"/><path d="M4.3 5 L18.7 19.7" stroke="#410e0b" stroke-width="1.7"/></g></svg>
<div style="position:absolute;left:584px;top:569px;width:56px;height:48px;background:#a8c7fa;border-radius:14px;"></div>
<svg style="position:absolute;left:600px;top:581px;" width="24" height="24" viewBox="0 0 24 24"><rect x="3.5" y="4.5" width="17" height="12" fill="none" stroke="#062e6f" stroke-width="2"/><path d="M2 20 H22" stroke="#062e6f" stroke-width="2"/><path d="M12 7.5 L15.5 11 H13.2 V14 H10.8 V11 H8.5 Z" fill="#062e6f"/></svg>
<div style="position:absolute;left:648px;top:569px;width:56px;height:48px;background:#333537;border-radius:24px;"></div>
<div style="position:absolute;left:712px;top:569px;width:56px;height:48px;background:#333537;border-radius:24px;"></div>
<div style="position:absolute;left:776px;top:569px;width:56px;height:48px;background:#333537;border-radius:24px;"></div>
<div style="position:absolute;left:840px;top:569px;width:36px;height:48px;background:#333537;border-radius:24px;"></div>
<svg style="position:absolute;left:664px;top:581px;" width="24" height="24" viewBox="0 0 24 24"><circle cx="12" cy="12" r="9" fill="none" stroke="#e3e3e3" stroke-width="2.2"/><circle cx="8.6" cy="9.6" r="1.7" fill="#e3e3e3"/><circle cx="15.4" cy="9.6" r="1.7" fill="#e3e3e3"/><path d="M7 13 H17 Q16.5 17.8 12 17.8 Q7.5 17.8 7 13 Z" fill="#e3e3e3"/></svg>
<svg style="position:absolute;left:728px;top:581px;" width="24" height="24" viewBox="0 0 24 24"><rect x="3.7" y="5" width="16.8" height="14" rx="1" fill="none" stroke="#e3e3e3" stroke-width="2"/><path d="M11.3 9.9 H6.9 V14.4 H11.3 M17.9 9.9 H13.5 V14.4 H17.9" fill="none" stroke="#e3e3e3" stroke-width="2.2"/></svg>
<svg style="position:absolute;left:792px;top:580px;" width="24" height="26" viewBox="0 0 24 26"><path d="M8.5 14 V5.5 Q8.5 4 9.8 4 Q11 4 11 5.5 V12 V4 Q11 2.5 12.3 2.5 Q13.6 2.5 13.6 4 V12 V4.8 Q13.6 3.3 14.9 3.3 Q16.2 3.3 16.2 4.8 V12.5 V7 Q16.2 5.6 17.5 5.6 Q18.8 5.6 18.8 7 V15 Q18.8 22 12.8 22 Q9.5 22 7.5 19 L4.3 14.2 Q3.8 13.2 4.8 12.7 Q5.8 12.3 6.6 13.2 L8.5 15.5" fill="none" stroke="#e3e3e3" stroke-width="1.8" stroke-linejoin="round"/></svg>
<svg style="position:absolute;left:852px;top:581px;" width="12" height="24" viewBox="0 0 12 24"><circle cx="6" cy="6" r="2" fill="#e3e3e3"/><circle cx="6" cy="12" r="2" fill="#e3e3e3"/><circle cx="6" cy="18" r="2" fill="#e3e3e3"/></svg>
<div style="position:absolute;left:884px;top:569px;width:72px;height:48px;background:#dc362e;border-radius:24px;"></div>
<svg style="position:absolute;left:905px;top:578px;" width="30" height="30" viewBox="0 0 30 30"><g transform="scale(1.25)"><path d="M3 13.8 Q3 10 12 10 Q21 10 21 13.8 L20.4 15.3 Q20 16 19.2 15.8 L16.5 15 Q15.8 14.7 15.8 14 V12.6 Q12 11.6 8.2 12.6 V14 Q8.2 14.7 7.5 15 L4.8 15.8 Q4 16 3.6 15.3 Z" fill="#fff"/></g></svg>
<svg style="position:absolute;left:1117px;top:582px;" width="24" height="24" viewBox="0 0 24 24"><circle cx="12" cy="12" r="9.2" fill="none" stroke="#fff" stroke-width="2.1"/><circle cx="12" cy="7.8" r="1.4" fill="#fff"/><path d="M12 10.5 V17" stroke="#fff" stroke-width="2.4"/></svg>
<div style="position:absolute;left:1178px;top:560px;width:26px;height:20px;background:#5f6368;border-radius:10px;"></div>
<div class="t" style="left:1183.5px;top:564.84px;font-size:12px;color:#fff;font-weight:700;font-family:'Liberation Sans', sans-serif;">12</div>
<svg style="position:absolute;left:1164px;top:580px;" width="26" height="24" viewBox="0 0 26 24"><circle cx="9.5" cy="8.5" r="3.2" fill="none" stroke="#fff" stroke-width="2.1"/><path d="M2.5 19.5 V18 Q2.5 14.3 9.5 14.3 Q16.5 14.3 16.5 18 V19.5 Z" fill="none" stroke="#fff" stroke-width="2.1"/><path d="M15 5.5 Q18 5.3 18 8.5 Q18 11.7 15 11.5 Q16.3 8.5 15 5.5 Z" fill="#fff"/><path d="M18 14.5 Q23.5 15 23.5 18 V19.5 H19 V18 Q19 16 18 14.5 Z" fill="#fff"/></svg>
<svg style="position:absolute;left:1213px;top:581px;" width="24" height="24" viewBox="0 0 24 24"><path d="M2.5 2.5 H21.5 V17.5 H6.5 L2.5 21.5 Z" fill="none" stroke="#fff" stroke-width="2.1" stroke-linejoin="round"/><path d="M6.5 7 H17.5 M6.5 10.5 H17.5 M6.5 14 H13.5" stroke="#fff" stroke-width="2"/></svg>
<svg style="position:absolute;left:1263px;top:583px;" width="20" height="20" viewBox="0 0 20 20"><circle cx="3" cy="3" r="2.1" fill="#fff"/><circle cx="3" cy="10" r="2.1" fill="#fff"/><circle cx="3" cy="17" r="2.1" fill="#fff"/><circle cx="10" cy="3" r="2.1" fill="#fff"/><circle cx="10" cy="10" r="2.1" fill="#fff"/><circle cx="10" cy="17" r="2.1" fill="#fff"/><circle cx="17" cy="3" r="2.1" fill="#fff"/><circle cx="17" cy="10" r="2.1" fill="#fff"/><circle cx="17" cy="17" r="2.1" fill="#fff"/></svg>
<svg style="position:absolute;left:1310px;top:580px;" width="24" height="26" viewBox="0 0 24 26"><path d="M3.5 11 H16.5 V23.5 H3.5 Z" fill="none" stroke="#fff" stroke-width="2.1"/><path d="M6 11 V7.5 Q6 3.2 10 3.2 Q14 3.2 14 7.5 V11" fill="none" stroke="#fff" stroke-width="2.1"/><circle cx="17.5" cy="19" r="5.5" fill="#fff" stroke="#131314" stroke-width="1.5"/><path d="M17.5 16 V19.5 M17.5 21 V22" stroke="#131314" stroke-width="1.8"/></svg>
<div style="position:absolute;left:328px;top:444px;width:258px;height:101px;background:#3c4043;border-radius:8px;"></div>
<svg style="position:absolute;left:446px;top:544px;" width="23" height="15" viewBox="0 0 23 15"><path d="M0 0 H23 L13.5 12.5 Q11.5 14.5 9.5 12.5 Z" fill="#3c4043"/></svg>
<div class="t" style="left:349px;top:468.15px;font-size:14px;color:#e8eaed;font-weight:400;font-family:'Liberation Sans', sans-serif;-webkit-text-stroke:0.3px #e8eaed;">¿Estás hablando? El</div>
<div class="t" style="left:349px;top:488.15px;font-size:14px;color:#e8eaed;font-weight:400;font-family:'Liberation Sans', sans-serif;-webkit-text-stroke:0.3px #e8eaed;">micrófono está desactivado.</div>
<div class="t" style="left:349px;top:508.15px;font-size:14px;color:#e8eaed;font-weight:400;font-family:'Liberation Sans', sans-serif;-webkit-text-stroke:0.3px #e8eaed;">Haz clic en él para activarlo.</div>
<svg style="position:absolute;left:555px;top:459px;" width="16" height="16" viewBox="0 0 16 16"><path d="M1.5 1.5 L14.5 14.5 M14.5 1.5 L1.5 14.5" stroke="#c4c7c5" stroke-width="2"/></svg>
<svg style="position:absolute;left:636px;top:95px;" width="10" height="14" viewBox="0 0 10 14"><path d="M1 1 V11 L3.5 8.7 L5.3 12.5 L6.8 11.8 L5 8.2 H8.3 Z" fill="#fff" stroke="#333" stroke-width="0.9"/></svg>
</body></html>
